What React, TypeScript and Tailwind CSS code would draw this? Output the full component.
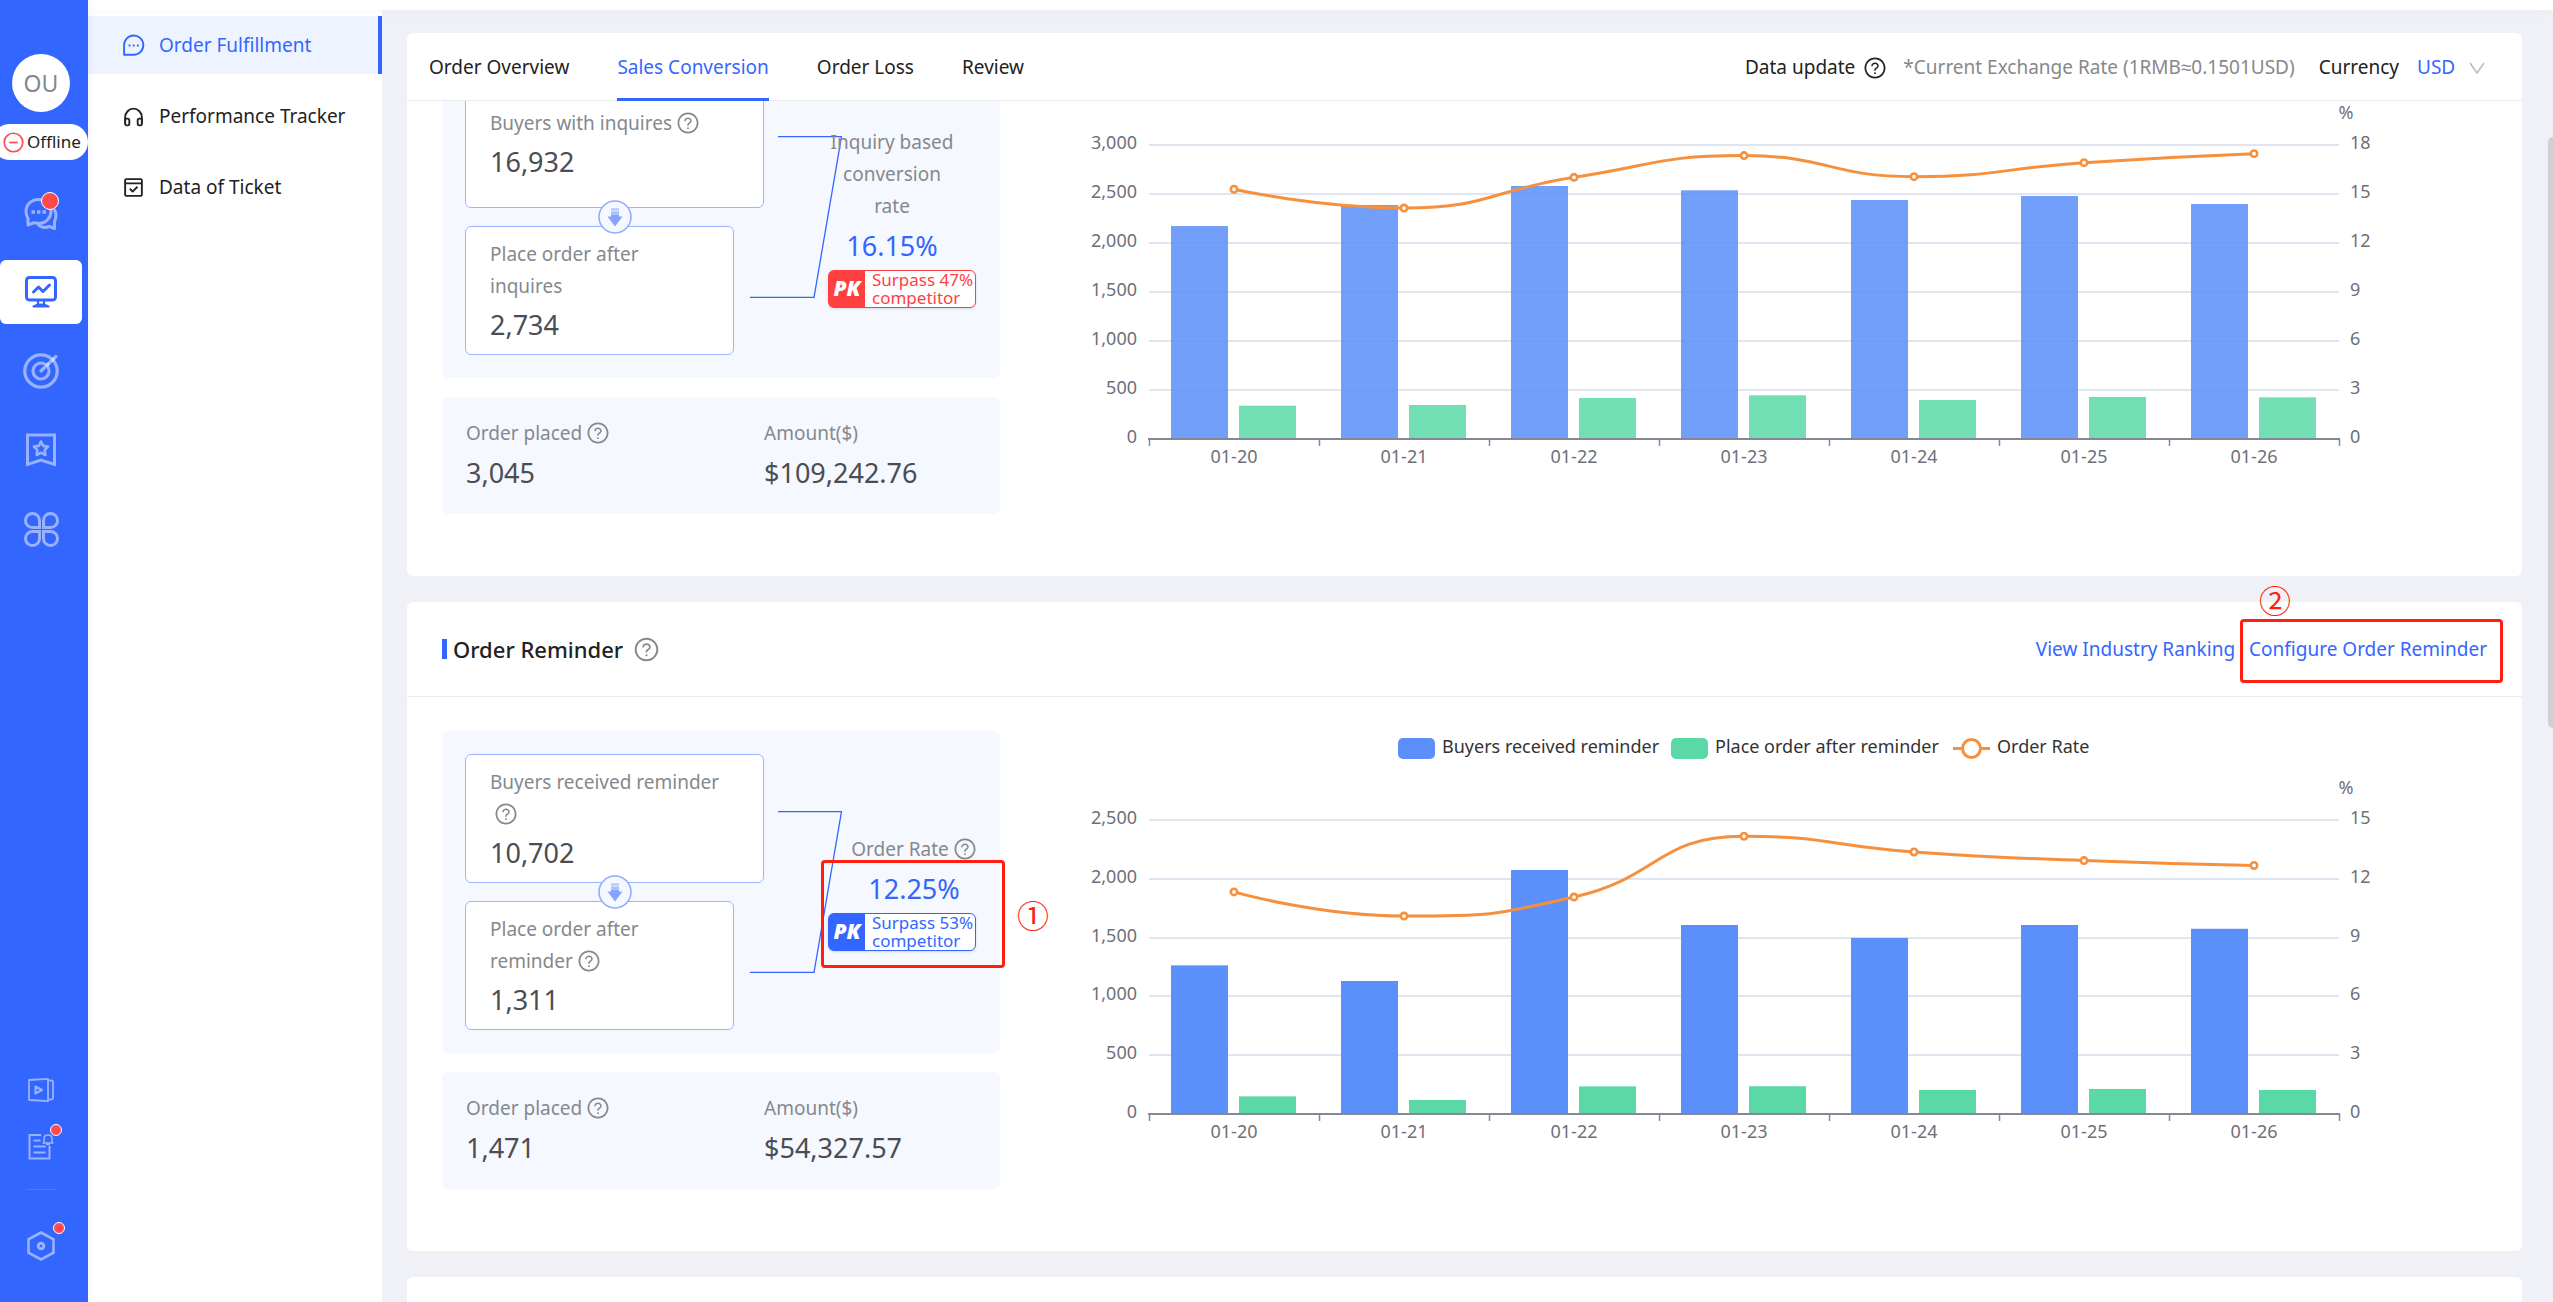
import React, { useState } from 'react';
import { AiOutlineQuestionCircle } from 'react-icons/ai';

interface ChartData {
  max: number;
  step: number;
  rateMax: number;
  rateStep: number;
  total: number[];
  placed: number[];
  rate: number[];
  faded?: boolean;
  legend?: boolean;
}

const DAYS = ['01-20', '01-21', '01-22', '01-23', '01-24', '01-25', '01-26'];

const INQUIRY_CHART: ChartData = {
  max: 3000,
  step: 500,
  rateMax: 18,
  rateStep: 3,
  total: [2173, 2388, 2582, 2538, 2439, 2480, 2398],
  placed: [340, 347, 418, 446, 398, 429, 425],
  rate: [15.29, 14.14, 16.02, 17.35, 16.06, 16.92, 17.47],
  faded: true,
};

const REMINDER_CHART: ChartData = {
  max: 2500,
  step: 500,
  rateMax: 15,
  rateStep: 3,
  total: [1264, 1131, 2075, 1607, 1497, 1607, 1575],
  placed: [150, 119, 235, 236, 204, 213, 204],
  rate: [11.33, 10.1, 11.07, 14.17, 13.37, 12.93, 12.68],
  legend: true,
};

const TABS = ['Order Overview', 'Sales Conversion', 'Order Loss', 'Review'];

// plot area inside the chart viewBox
const LEFT = 89;
const RIGHT = 1279;
const TOP = 89;
const BOTTOM = 383;
const BAND = (RIGHT - LEFT) / DAYS.length;

const clamp = (v: number, a: number, b: number) =>
  Math.max(Math.min(v, Math.max(a, b)), Math.min(a, b));

// smooth curve whose handles never leave the box of their own segment
const smoothPath = (pts: number[][]) => {
  let d = `M${pts[0][0]},${pts[0][1]}`;
  let cp = pts[0];
  for (let i = 1; i < pts.length; i++) {
    const [x, y] = pts[i];
    const prev = pts[i - 1];
    const next = pts[i + 1];
    let inCp = [x, y];
    let outCp = [x, y];
    if (next) {
      const lenPrev = Math.hypot(x - prev[0], y - prev[1]);
      const lenNext = Math.hypot(next[0] - x, next[1] - y);
      const ratio = lenNext / (lenNext + lenPrev);
      outCp = [
        clamp(x + (next[0] - prev[0]) * 0.5 * ratio, x, next[0]),
        clamp(y + (next[1] - prev[1]) * 0.5 * ratio, y, next[1]),
      ];
      inCp = [
        clamp(x - ((outCp[0] - x) * lenPrev) / lenNext, prev[0], x),
        clamp(y - ((outCp[1] - y) * lenPrev) / lenNext, prev[1], y),
      ];
      outCp = [
        x + ((x - inCp[0]) * lenNext) / lenPrev,
        y + ((y - inCp[1]) * lenNext) / lenPrev,
      ];
    }
    d += ` C${cp[0]},${cp[1]} ${inCp[0]},${inCp[1]} ${x},${y}`;
    cp = outCp;
  }
  return d;
};

const Chart: React.FC<{ data: ChartData }> = ({ data }) => {
  const height = BOTTOM - TOP;
  const rows = data.max / data.step;
  const opacity = data.faded ? 0.86 : 1;
  const points = data.rate.map((r, i) => [
    LEFT + BAND * (i + 0.5),
    BOTTOM - (r / data.rateMax) * height,
  ]);

  return (
    <svg viewBox="0 0 1427 458" className="min-w-0 flex-1 text-[18px]" role="img" aria-label="Conversion chart">
      {data.legend && (
        <g fill="#333333">
          <rect x="338" y="7" width="37" height="21" rx="5" fill="#5b8ff9" />
          <text x="382" y="22">Buyers received reminder</text>
          <rect x="611" y="7" width="37" height="21" rx="5" fill="#5ad8a6" />
          <text x="655" y="22">Place order after reminder</text>
          <path d="M893 17.5H930" stroke="#f6903d" strokeWidth="3" />
          <circle cx="911.5" cy="17.5" r="9" fill="#fff" stroke="#f6903d" strokeWidth="3" />
          <text x="937" y="22">Order Rate</text>
        </g>
      )}
      {Array.from({ length: rows + 1 }, (_, i) => {
        const y = Math.round(BOTTOM - (i * height) / rows);
        return (
          <g key={i} fill="#6e7079">
            {i > 0 && <path d={`M${LEFT} ${y}H${RIGHT}`} stroke="#e0e6f1" strokeWidth="2" />}
            <text x="77" y={y + 4} textAnchor="end">{(i * data.step).toLocaleString('en-US')}</text>
            <text x="1290" y={y + 4}>{i * data.rateStep}</text>
          </g>
        );
      })}
      <text x="1286" y="63" textAnchor="middle" fill="#6e7079">%</text>
      {DAYS.map((day, i) => {
        const x = LEFT + BAND * i;
        const h1 = (data.total[i] / data.max) * height;
        const h2 = (data.placed[i] / data.max) * height;
        return (
          <g key={day}>
            <rect x={x + 22} y={BOTTOM - h1} width="57" height={h1} fill="#5b8ff9" opacity={opacity} />
            <rect x={x + 90} y={BOTTOM - h2} width="57" height={h2} fill="#5ad8a6" opacity={opacity} />
            <text x={x + BAND / 2} y="407" textAnchor="middle" fill="#6e7079">{day}</text>
          </g>
        );
      })}
      <path d={`M${LEFT - 1} ${BOTTOM}H${RIGHT + 1}`} stroke="#858894" strokeWidth="2" />
      {Array.from({ length: DAYS.length + 1 }, (_, i) => (
        <path key={i} d={`M${LEFT + BAND * i + 0.5} ${BOTTOM}v7`} stroke="#858894" strokeWidth="1.5" />
      ))}
      <path d={smoothPath(points)} fill="none" stroke="#f6903d" strokeWidth="3" />
      {points.map(([x, y]) => (
        <circle key={x} cx={x} cy={y} r="3.2" fill="#fff" stroke="#f6903d" strokeWidth="2.6" />
      ))}
    </svg>
  );
};

const Help: React.FC = () => (
  <AiOutlineQuestionCircle size={24} className="ml-1 inline-block align-[-5px]" />
);

interface StepBoxProps {
  label: string;
  value: string;
  help?: boolean;
  className: string;
}

const StepBox: React.FC<StepBoxProps> = ({ label, value, help, className }) => (
  <div className={`flex h-[129px] flex-col justify-center rounded-md border border-[#9db5ff] bg-white px-6 pt-1 ${className}`}>
    <div className="leading-8 text-[#86888c]">
      {label}
      {help && <Help />}
    </div>
    <div className="text-[27px] leading-[46px] text-[#4b4d52]">{value}</div>
  </div>
);

const Metric: React.FC<{ label: string; value: string; help?: boolean }> = ({ label, value, help }) => (
  <div>
    <div className="leading-8 text-[#86888c]">
      {label}
      {help && <Help />}
    </div>
    <div className="text-[27px] leading-[48px] text-[#4b4d52]">{value}</div>
  </div>
);

interface FunnelProps {
  from: StepBoxProps;
  to: StepBoxProps;
  rateLabel: string;
  rateHelp?: boolean;
  rate: string;
  surpass: string;
  tone: 'red' | 'blue';
  orders: string;
  amount: string;
  chart: ChartData;
  marked?: boolean;
}

const Funnel: React.FC<FunnelProps> = (props) => {
  const { from, to, rateLabel, rateHelp, rate, surpass, tone, orders, amount, chart, marked } = props;
  const isRed = tone === 'red';
  return (
    <div className="flex items-start gap-[60px] px-[35px] pt-[34px] pb-[62px]">
      <div className="flex w-[558px] shrink-0 flex-col gap-[19px]">
        <div className="flex items-center rounded-md bg-[#f5f8fe] p-[23px]">
          <div className="relative flex w-[299px] shrink-0 flex-col gap-[18px]">
            <StepBox {...from} />
            <StepBox {...to} />
            <svg viewBox="0 0 34 34" className="absolute top-1/2 left-1/2 size-[34px] -translate-1/2">
              <circle cx="17" cy="17" r="16" fill="#f5f8fe" stroke="#8ea9ff" strokeWidth="1.5" />
              <path d="M13 8h8v3h-8z" fill="#c0d0ff" />
              <path d="M13 11.600h8v2.600h-8z" fill="#a9beff" />
              <path d="M13 14.600h8v2h3.500L17 26.500 9.500 16.600H13z" fill="#86a3ff" />
            </svg>
          </div>
          <svg viewBox="0 0 92 162" className="-ml-3.5 h-[162px] w-[92px] shrink-0" fill="none" stroke="#3366ff">
            <path d="M28 .5H91.500L64 161.500H0" strokeWidth="1.300" />
          </svg>
          <div className={`relative -ml-3.5 shrink-0 ${rateHelp ? 'w-[172px]' : 'w-[128px]'}`}>
            <div className="text-center leading-8 text-[#86888c]">
              {rateLabel}
              {rateHelp && <Help />}
            </div>
            <div className="text-center text-[27px] leading-[48px] text-[#3366ff]">{rate}</div>
            <div
              className={`flex h-[38px] w-[148px] rounded-md border bg-white shadow-sm ${isRed ? 'border-[#ff4040] text-[#ff4040]' : 'border-[#3366ff] text-[#3366ff]'}`}
            >
              <span
                className={`flex w-9 items-center justify-center rounded-l-[4px] text-[21px] font-black text-white italic ${isRed ? 'bg-[#ff4040]' : 'bg-[#3366ff]'}`}
              >
                PK
              </span>
              <span className="pl-[7px] text-[17px] leading-[18px] whitespace-nowrap">
                {surpass}
                <br />
                competitor
              </span>
            </div>
            {marked && (
              <>
                <div className="absolute -right-[5px] -bottom-[17px] -left-[7px] h-[108px] rounded-sm border-[3px] border-[#ff1e10]" />
                <span className="absolute bottom-3 left-full ml-[17px] font-['Noto_Sans_CJK_SC',sans-serif] text-[32px] leading-[50px] text-[#ff1e10]">①</span>
              </>
            )}
          </div>
        </div>
        <div className="grid grid-cols-[298px_1fr] rounded-md bg-[#f5f8fe] px-6 pt-5 pb-[17px]">
          <Metric label="Order placed" value={orders} help />
          <Metric label="Amount($)" value={amount} />
        </div>
      </div>
      <Chart data={chart} />
    </div>
  );
};

const Dot: React.FC<{ className: string }> = ({ className }) => (
  <span className={`absolute rounded-full border-white bg-[#ff4b4b] ${className}`} />
);

const RailButton: React.FC<{ label: string; active?: boolean; children: React.ReactNode }> = ({ label, active, children }) => (
  <button
    aria-label={label}
    className={`relative flex h-16 w-[82px] items-center justify-center rounded-md ${active ? 'bg-white text-[#3366ff]' : 'text-[#99b2ff]'}`}
  >
    {children}
  </button>
);

const Rail: React.FC = () => (
  <aside className="z-20 flex w-[88px] shrink-0 flex-col bg-[#3366ff] pt-[54px] pb-7 shadow-[2px_0_8px_rgba(0,0,0,0.04)]">
    <div className="ml-3 flex size-[58px] items-center justify-center rounded-full bg-white text-[23px] text-[#86888c]">
      OU
    </div>
    <button className="mt-3 mr-0 -ml-2 flex h-9 items-center gap-[3px] rounded-full bg-white pl-[11px] text-[17px] text-[#222222]">
      <svg viewBox="0 0 22 22" className="size-[21px]" fill="none" stroke="#ff4b4b" strokeWidth="1.8">
        <circle cx="11" cy="11" r="9.700" />
        <path d="M6.500 11h9" />
      </svg>
      Offline
    </button>
    <nav className="mt-[21px] flex flex-col gap-[15px]">
      <RailButton label="Messages">
        <svg viewBox="0 0 36 36" className="size-9" fill="none" stroke="currentColor" strokeWidth="3" strokeLinejoin="round">
          <path d="M5 30V23.500C3.500 21 3 19 3 16.500 3 9.500 8.500 4.500 15 4.500S28 9.500 28 16.500c0 6.500-5.500 12-12 12-2.500 0-4-.7-5.500-.7z" />
          <path d="M31 14c2.500 3.500 2.500 8 .5 12.500V33.500l-5-2c-4 1.500-8.500 1-11.500-2" />
          <path d="M8.500 17h3.400M14 17h3.400M19.500 17h3.400" strokeWidth="3.500" />
        </svg>
        <Dot className="top-[11px] left-[41px] size-[18px] border" />
      </RailButton>
      <RailButton label="Data" active>
        <svg viewBox="0 0 34 34" className="size-[34px]" fill="none" stroke="currentColor" strokeWidth="3" strokeLinecap="round" strokeLinejoin="round">
          <rect x="2.500" y="2.500" width="29" height="22.500" rx="3" />
          <path d="M9.500 17l5-5 4.500 4.500 6.500-6.500" />
          <path d="M14 25.500v4M20 25.500v4M9.500 31.500l4.500-2h6l4.500 2z" strokeWidth="2.200" />
        </svg>
      </RailButton>
      <RailButton label="Goals">
        <svg viewBox="0 0 38 38" className="size-[38px]" fill="none" stroke="currentColor" strokeWidth="3.200" strokeLinecap="round">
          <circle cx="19" cy="19" r="16.200" />
          <circle cx="19" cy="19" r="8" />
          <path d="M19 19L34 4.500" />
          <path d="M25 13.200l1-1M30.500 8l.8-.8" stroke="#ccd9ff" />
        </svg>
      </RailButton>
      <RailButton label="Favorites">
        <svg viewBox="0 0 34 36" className="h-9 w-[34px]" fill="none" stroke="currentColor" strokeWidth="3">
          <path d="M3.500 3h27v29.500L17 28 3.500 32.500z" />
          <path d="M17 9.500l2.200 4.400 4.900.7-3.500 3.500.8 4.900-4.400-2.300-4.400 2.300.8-4.900-3.500-3.500 4.900-.7z" strokeWidth="2.600" strokeLinejoin="round" />
        </svg>
      </RailButton>
      <RailButton label="Applications">
        <svg viewBox="0 0 36 36" className="size-9" fill="none" stroke="currentColor" strokeWidth="3">
          <path d="M16.500 16.500H9.500A7 7 0 0 1 9.500 2.500A7 7 0 0 1 16.500 9.500z" />
          <path d="M20.500 16.500H27.500A7 7 0 0 0 27.500 2.500A7 7 0 0 0 20.500 9.500z" />
          <path d="M16.500 20.500H9.500A7 7 0 0 0 9.500 34.500A7 7 0 0 0 16.500 27.500z" />
          <path d="M20.500 20.500H27.500A7 7 0 0 1 27.500 34.500A7 7 0 0 1 20.500 27.500z" />
        </svg>
      </RailButton>
    </nav>
    <div className="mt-auto flex flex-col">
      <button aria-label="Tutorials" className="flex h-14 w-[82px] items-center justify-center text-[#99b2ff]">
        <svg viewBox="0 0 28 26" className="h-[26px] w-7" fill="none" stroke="currentColor" strokeWidth="1.800" strokeLinejoin="round">
          <path d="M2 3l19-1.200v22.400L2 23z" />
          <path d="M22 3.500h2.500q1.500 0 1.500 1.500v16q0 1.500-1.500 1.500H22" />
          <path d="M8.500 9.500l6.500 3.500-6.500 3.500z" strokeWidth="2" />
        </svg>
      </button>
      <button aria-label="Announcements" className="relative flex h-14 w-[82px] items-center justify-center text-[#99b2ff]">
        <svg viewBox="0 0 28 28" className="size-7" fill="none" stroke="currentColor" strokeWidth="2">
          <path d="M14 3H2.500v23.500h20V14" />
          <path d="M6.500 8.500h7M6.500 14.500h12M6.500 20.500h12" />
          <path d="M15.500 11h11M17 11V6.500q0-3.500 4-3.500t4 3.500V11M19 12.500h4" strokeWidth="1.600" />
        </svg>
        <Dot className="top-1.5 left-[50px] size-3 border" />
      </button>
      <div className="mt-[15px] ml-[26px] h-px w-[30px] bg-[#4d79ff]" />
      <button aria-label="Settings" className="relative mt-7 flex h-14 w-[82px] items-center justify-center text-[#99b2ff]">
        <svg viewBox="0 0 30 32" className="h-8 w-[30px]" fill="none" stroke="currentColor" strokeWidth="2.600">
          <path d="M15 2.500l12.500 6.800v13.400L15 29.500 2.500 22.700V9.300z" />
          <circle cx="15" cy="16" r="2.800" strokeWidth="3" />
        </svg>
        <Dot className="top-1 left-[53px] size-3 border" />
      </button>
    </div>
  </aside>
);

const MENU = [
  {
    name: 'Order Fulfillment',
    icon: (
      <>
        <path d="M2 19.800V12.500V11A9.200 9.200 0 1 1 11.200 19.800z" />
        <path d="M6.300 11h1.800M10.300 11h1.800M14.300 11h1.800" />
      </>
    ),
  },
  {
    name: 'Performance Tracker',
    icon: (
      <>
        <path d="M3 18v-6a8 8.500 0 0 1 16 0v6" />
        <rect x="3" y="13" width="4" height="6.500" rx="1.500" />
        <rect x="15" y="13" width="4" height="6.500" rx="1.500" />
      </>
    ),
  },
  {
    name: 'Data of Ticket',
    icon: (
      <>
        <rect x="3" y="3" width="16" height="16" rx="1" />
        <path d="M3 7h16M7.500 12.200l2.700 2.700 4.600-4.600" />
      </>
    ),
  },
];

export default function App() {
  const [tab, setTab] = useState('Sales Conversion');
  const [menu, setMenu] = useState('Order Fulfillment');
  const [currency, setCurrency] = useState('USD');

  return (
    <div className="flex h-screen overflow-hidden bg-[#eff1f6] font-['Noto_Sans',sans-serif] text-[19px] text-[#222222]">
      <Rail />
      <div className="flex min-w-0 flex-1 flex-col">
        <div className="z-10 h-2.5 shrink-0 bg-white shadow-[0_0_14px_rgba(0,0,0,0.04)]" />
        <div className="relative flex min-h-0 flex-1">
          <nav className="flex w-[294px] shrink-0 flex-col gap-[13px] bg-white pt-1.5">
            {MENU.map((item) => (
              <button
                key={item.name}
                onClick={() => setMenu(item.name)}
                className={`flex h-[58px] items-center gap-3.5 border-r-4 pl-[34px] text-left ${menu === item.name ? 'border-[#3366ff] bg-[#edf4ff] text-[#3366ff]' : 'border-transparent'}`}
              >
                <svg viewBox="0 0 22 22" className="size-[23px]" fill="none" stroke="currentColor" strokeWidth="1.800" strokeLinejoin="round">
                  {item.icon}
                </svg>
                {item.name}
              </button>
            ))}
          </nav>

          <main className="flex min-w-0 flex-1 flex-col overflow-hidden pt-[23px] pr-[31px] pl-[25px]">
            <header className="z-10 flex h-[68px] shrink-0 justify-between rounded-t-md border-b border-[#ebecf0] bg-white pr-[37px] pl-[22px]">
              <div className="flex gap-12">
                {TABS.map((name) => (
                  <button
                    key={name}
                    onClick={() => setTab(name)}
                    className={`-mb-px border-b-[3px] pt-1 ${tab === name ? 'border-[#3366ff] text-[#3366ff]' : 'border-transparent'}`}
                  >
                    {name}
                  </button>
                ))}
              </div>
              <div className="flex items-center pt-0.5">
                <span>Data update</span>
                <AiOutlineQuestionCircle size={24} className="ml-2" />
                <span className="ml-4 text-[#86888c]">*Current Exchange Rate (1RMB≈0.1501USD)</span>
                <label htmlFor="currency" className="ml-6">Currency</label>
                <select
                  id="currency"
                  value={currency}
                  onChange={(e) => setCurrency(e.target.value)}
                  className="ml-[18px] appearance-none bg-transparent text-[#3366ff]"
                >
                  <option>USD</option>
                  <option>RMB</option>
                </select>
                <svg viewBox="0 0 16 12" className="ml-2.5 h-3 w-4" fill="none" stroke="#b8bac0" strokeWidth="1.500">
                  <path d="M1 1l7 10 7-10" />
                </svg>
              </div>
            </header>

            <section className="shrink-0 overflow-hidden rounded-b-md bg-white">
              {/* scrolled up under the tab bar */}
              <div className="-mt-[79px]">
                <Funnel
                  from={{ label: 'Buyers with inquires', value: '16,932', help: true, className: 'w-[299px]' }}
                  to={{ label: 'Place order after inquires', value: '2,734', className: 'w-[269px]' }}
                  rateLabel="Inquiry based conversion rate"
                  rate="16.15%"
                  surpass="Surpass 47%"
                  tone="red"
                  orders="3,045"
                  amount="$109,242.76"
                  chart={INQUIRY_CHART}
                />
              </div>
            </section>

            <section className="mt-[26px] shrink-0 rounded-md bg-white">
              <div className="flex h-[95px] items-center justify-between border-b border-[#ebecf0] pr-[35px] pl-[35px]">
                <h2 className="flex items-center text-[22px] font-medium">
                  <span className="mr-1.5 h-5 w-[5px] bg-[#3366ff]" />
                  Order Reminder
                  <AiOutlineQuestionCircle size={27} className="ml-2.5 text-[#86888c]" />
                </h2>
                <div className="flex gap-3.5 text-[#3366ff]">
                  <a href="#ranking">View Industry Ranking</a>
                  <a href="#configure" className="relative">
                    Configure Order Reminder
                    <span className="absolute -top-4 -right-4 -left-[9px] h-16 rounded-sm border-[3px] border-[#ff1e10]" />
                    <span className="absolute -top-[61px] left-2.5 font-['Noto_Sans_CJK_SC',sans-serif] text-[32px] leading-[50px] text-[#ff1e10]">②</span>
                  </a>
                </div>
              </div>
              <Funnel
                from={{ label: 'Buyers received reminder', value: '10,702', help: true, className: 'w-[299px]' }}
                to={{ label: 'Place order after reminder', value: '1,311', help: true, className: 'w-[269px]' }}
                rateLabel="Order Rate"
                rateHelp
                rate="12.25%"
                surpass="Surpass 53%"
                tone="blue"
                orders="1,471"
                amount="$54,327.57"
                chart={REMINDER_CHART}
                marked
              />
            </section>

            <section className="mt-[26px] h-24 shrink-0 rounded-md bg-white" />
          </main>

          <div className="absolute top-[127px] right-0 h-[591px] w-[5px] rounded-l-full bg-[#cfd0d3]" />
        </div>
      </div>
    </div>
  );
}
